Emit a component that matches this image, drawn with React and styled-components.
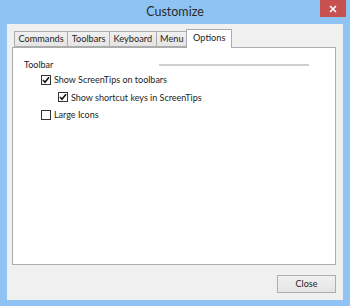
import styled, { createGlobalStyle } from 'styled-components'

const Global = createGlobalStyle`
    html, body {
        margin: 0;
        padding: 0;
    }
    body {
        font-family: Lato, "Open Sans", sans-serif;
        color: #1e1e1e;
    }
`
const Window = styled.div`
    box-sizing: border-box;
    width: 350px;
    height: 306px;
    padding: 0 7px 7px;
    background: #8ec3f4;
    display: flex;
    flex-direction: column;
`
const TitleBar = styled.div`
    height: 24px;
    flex-shrink: 0;
    display: grid;
    grid-template-columns: 1fr auto 1fr;
    align-items: center;
`
const Title = styled.div`
    grid-column: 2;
    font-size: 12.5px;
    color: #2b2b2b;
    line-height: 24px;
`
const CloseX = styled.div`
    grid-column: 3;
    justify-self: end;
    align-self: start;
    margin-right: -3px;
    width: 26px;
    height: 17px;
    background: #c75050;
    display: flex;
    align-items: center;
    justify-content: center;
`
const Client = styled.div`
    flex: 1;
    background: #f0f0f0;
    padding: 5px 7px 7px 5px;
    display: flex;
    flex-direction: column;
`
const TabStrip = styled.div`
    display: flex;
    align-items: flex-end;
    height: 18px;
    padding-left: 2px;
    position: relative;
    z-index: 1;
`
const Tab = styled.div`
    box-sizing: border-box;
    height: ${p => (p.$active ? '19px' : '16px')};
    margin: ${p => (p.$active ? '0 -2px -1px -1px' : '0 -1px 0 0')};
    padding: 0 ${p => (p.$active ? '6px' : '3.5px')};
    border: 1px solid #acacac;
    border-bottom: ${p => (p.$active ? 'none' : '1px solid #acacac')};
    background: ${p => (p.$active ? '#fff' : 'linear-gradient(#f0f0f0, #e5e5e5)')};
    font-size: 9.2px;
    line-height: ${p => (p.$active ? '15px' : '14px')};
    color: #1e1e1e;
    position: relative;
    z-index: ${p => (p.$active ? 2 : 0)};
`
const Panel = styled.div`
    height: 218px;
    box-sizing: border-box;
    background: #fff;
    border: 1px solid #acacac;
    padding: 9px 0 0 11px;
`
const GroupHead = styled.div`
    display: grid;
    grid-template-columns: 135px 150px;
    align-items: center;
    height: 14px;
    font-size: 9px;
`
const Rule = styled.div`
    height: 2px;
    background: #cfcfcf;
    margin-top: 2px;
`
const Option = styled.label`
    display: flex;
    align-items: center;
    gap: 3px;
    height: 17.5px;
    margin-left: ${p => p.$indent}px;
    font-size: 9px;
`
const Box = styled.span`
    box-sizing: border-box;
    width: 10px;
    height: 10px;
    border: 1px solid #333;
    background: #fff;
    display: flex;
    align-items: center;
    justify-content: center;
`
const Footer = styled.div`
    display: flex;
    justify-content: flex-end;
    padding-top: 10px;
`
const Button = styled.div`
    box-sizing: border-box;
    width: 59px;
    height: 18px;
    border: 1px solid #adadad;
    background: linear-gradient(#f0f0f0, #e5e5e5);
    font-size: 9px;
    line-height: 16px;
    text-align: center;
`

const Check = ({ checked }) => (
    <Box>
        {checked && (
            <svg width="8" height="8" viewBox="0 0 8 8">
                <path d="M1 4 L3 6.2 L7 1.2" fill="none" stroke="#111" strokeWidth="1.6"/>
            </svg>
        )}
    </Box>
)

const tabs = ['Commands', 'Toolbars', 'Keyboard', 'Menu', 'Options']

const App = () => {
    return(
        <>
            <Global/>
            <Window>
                <TitleBar>
                    <Title>Customize</Title>
                    <CloseX>
                        <svg width="8" height="8" viewBox="0 0 8 8">
                            <path d="M1 1 L7 7 M7 1 L1 7" stroke="#fff" strokeWidth="1.6"/>
                        </svg>
                    </CloseX>
                </TitleBar>
                <Client>
                    <TabStrip>
                        {tabs.map(t => (
                            <Tab key={t} $active={t === 'Options'}>{t}</Tab>
                        ))}
                    </TabStrip>
                    <Panel>
                        <GroupHead>
                            <span>Toolbar</span>
                            <Rule/>
                        </GroupHead>
                        <Option $indent={17}>
                            <Check checked/>
                            Show ScreenTips on toolbars
                        </Option>
                        <Option $indent={34}>
                            <Check checked/>
                            Show shortcut keys in ScreenTips
                        </Option>
                        <Option $indent={17}>
                            <Check/>
                            Large Icons
                        </Option>
                    </Panel>
                    <Footer>
                        <Button>Close</Button>
                    </Footer>
                </Client>
            </Window>
        </>
    )
}

export default App
